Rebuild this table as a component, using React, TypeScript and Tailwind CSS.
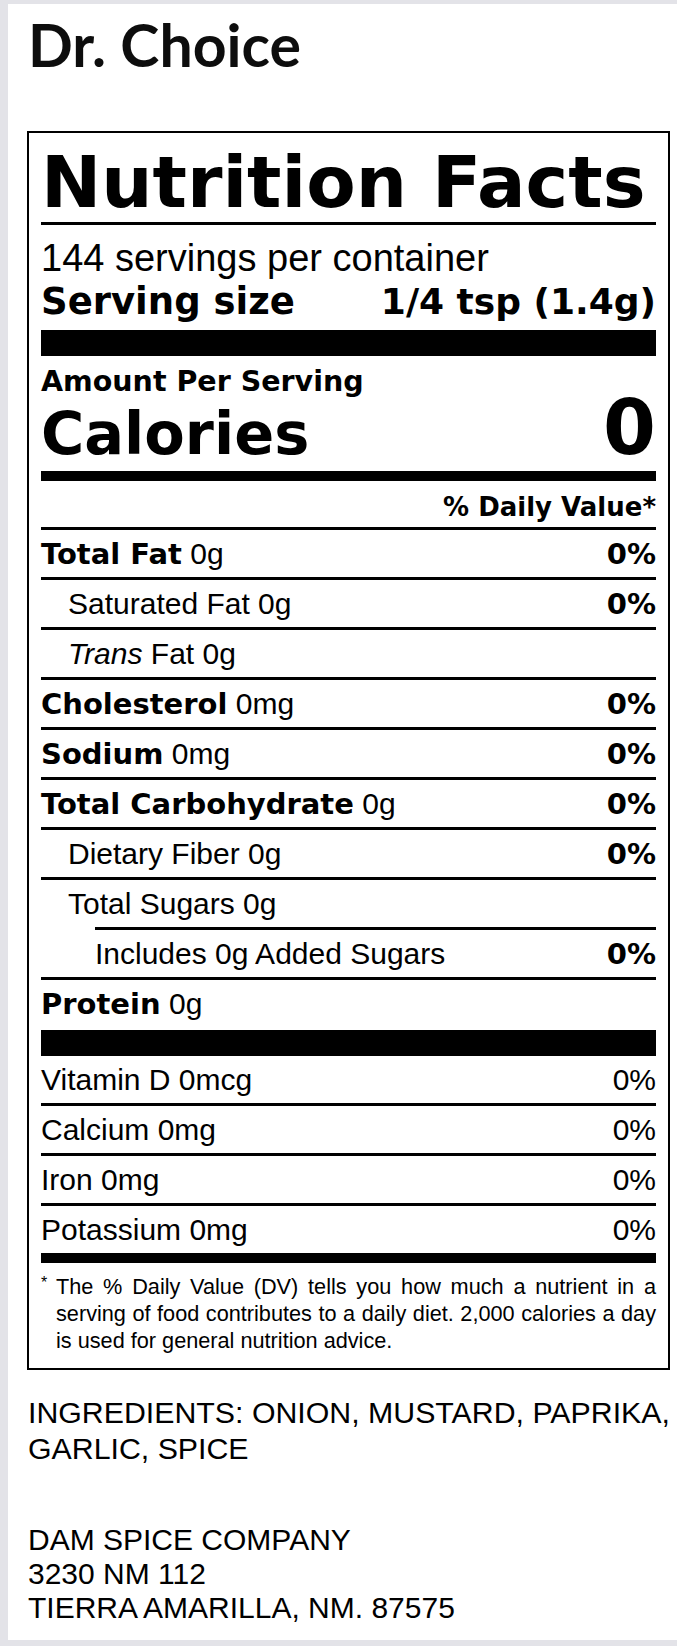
const heavy = "font-['DejaVu_Sans',sans-serif] font-bold";

function Rule({ className = "" }: { className?: string }) {
  return <div className={`h-[3px] bg-black ${className}`} />;
}

function NutrientRow({
  children,
  dv,
  light = false,
  className = "",
}: {
  children: React.ReactNode;
  dv?: string;
  light?: boolean;
  className?: string;
}) {
  return (
    <div className={`flex h-[47px] items-baseline justify-between pt-[9px] text-[30px] leading-[30px] ${className}`}>
      <div>{children}</div>
      {dv && <div className={light ? "" : `${heavy} text-[29px]`}>{dv}</div>}
    </div>
  );
}

function B({ children }: { children: React.ReactNode }) {
  return <span className={`${heavy} text-[29px]`}>{children}</span>;
}

export default function App() {
  return (
    <div className="min-h-[1646px] bg-[#e3e3e8] pt-[4px] pl-[8px] pb-[6px] font-['Liberation_Sans',Arial,sans-serif] text-black">
      <div className="h-[1636px] bg-white">
        {/* Brand */}
        <div className="pl-[20px] pt-[11px] font-['Lato',sans-serif] text-[59px] font-bold leading-[59px] text-[#0d0d0d]">
          Dr. Choice
        </div>

        {/* Label */}
        <div className="ml-[19px] mt-[57px] w-[643px] border-2 border-black px-[12px]">
          <h1 className={`${heavy} pt-[13px] text-[72px] leading-[72px]`}>Nutrition Facts</h1>
          <Rule className="mt-[4px]" />

          <div className="pt-[15px] pb-[10px]">
            <div className="h-[36px] text-[38px] leading-[36px]">144 servings per container</div>
            <div className={`${heavy} mt-[8px] flex h-[36px] justify-between leading-[36px]`}>
              <span className="text-[37px]">Serving size</span>
              <span className="text-[36px]">1/4 tsp (1.4g)</span>
            </div>
          </div>
          <div className="h-[26px] bg-black" />

          <div className={`${heavy} pt-[12px] pb-[8px]`}>
            <div className="text-[28.5px] leading-[28px]">Amount Per Serving</div>
            <div className="mt-[3px] flex items-baseline justify-between">
              <span className="text-[59px] leading-[58px]">Calories</span>
              <span className="text-[76px] leading-[58px]">0</span>
            </div>
          </div>
          <div className="h-[10px] bg-black" />

          <div className={`${heavy} pt-[13px] pb-[7px] text-right text-[26px] leading-[26px]`}>% Daily Value*</div>
          <Rule />

          <NutrientRow dv="0%">
            <B>Total Fat</B> 0g
          </NutrientRow>
          <Rule />
          <NutrientRow dv="0%" className="pl-[27px]">
            Saturated Fat 0g
          </NutrientRow>
          <Rule />
          <NutrientRow className="pl-[27px]">
            <i>Trans</i> Fat 0g
          </NutrientRow>
          <Rule />
          <NutrientRow dv="0%">
            <B>Cholesterol</B> 0mg
          </NutrientRow>
          <Rule />
          <NutrientRow dv="0%">
            <B>Sodium</B> 0mg
          </NutrientRow>
          <Rule />
          <NutrientRow dv="0%">
            <B>Total Carbohydrate</B> 0g
          </NutrientRow>
          <Rule />
          <NutrientRow dv="0%" className="pl-[27px]">
            Dietary Fiber 0g
          </NutrientRow>
          <Rule />
          <NutrientRow className="pl-[27px]">Total Sugars 0g</NutrientRow>
          <Rule className="ml-[54px]" />
          <NutrientRow dv="0%" className="pl-[54px]">
            Includes 0g Added Sugars
          </NutrientRow>
          <Rule />
          <NutrientRow className="h-[50px]">
            <B>Protein</B> 0g
          </NutrientRow>
          <div className="h-[26px] bg-black" />

          <NutrientRow dv="0%" light>
            Vitamin D 0mcg
          </NutrientRow>
          <Rule />
          <NutrientRow dv="0%" light>
            Calcium 0mg
          </NutrientRow>
          <Rule />
          <NutrientRow dv="0%" light>
            Iron 0mg
          </NutrientRow>
          <Rule />
          <NutrientRow dv="0%" light className="h-[46px]">
            Potassium 0mg
          </NutrientRow>
          <div className="h-[10px] bg-black" />

          {/* Footnote */}
          <div className="flex pt-[10px] pb-[14px] text-[21.7px] leading-[27px]">
            <span className="w-[15px] shrink-0 text-[16px] leading-[20px]">*</span>
            <div className="flex-1">
              <div className="text-justify [text-align-last:justify]">
                The % Daily Value (DV) tells you how much a nutrient in a
              </div>
              <div className="text-justify [text-align-last:justify]">
                serving of food contributes to a daily diet. 2,000 calories a day
              </div>
              <div>is used for general nutrition advice.</div>
            </div>
          </div>
        </div>

        {/* Ingredients */}
        <div className="mt-[25px] pl-[20px] text-[30.3px] leading-[36px] whitespace-nowrap">
          INGREDIENTS: ONION, MUSTARD, PAPRIKA,
          <br />
          GARLIC, SPICE
        </div>

        <div className="mt-[56px] pl-[20px] text-[30px] leading-[34px]">
          <div>DAM SPICE COMPANY</div>
          <div>3230 NM 112</div>
          <div>TIERRA AMARILLA, NM. 87575</div>
        </div>
      </div>
    </div>
  );
}
